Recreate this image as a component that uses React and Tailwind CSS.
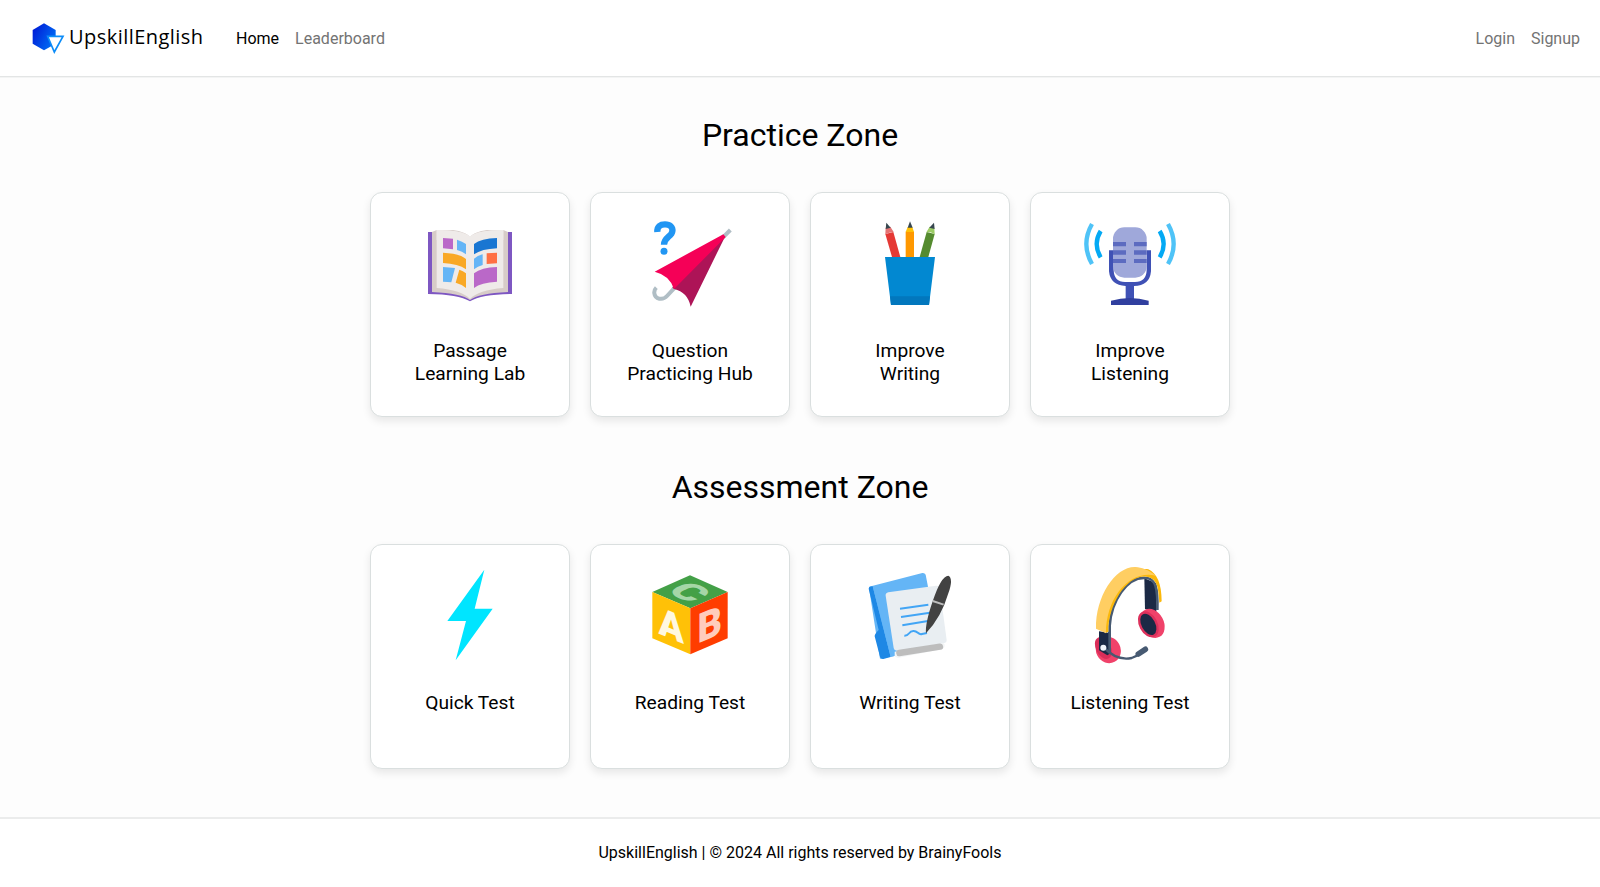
const BookIcon = () => (
  <svg className="h-[110px] w-[120px]" viewBox="0 -15 360 330">
    <path fill="#7e57c2" d="M54 66H306V252Q215 253 180 274Q145 253 54 252Z" />
    <path fill="#d7ccc8" d="M66 66L80 60H280L294 66V246Q205 250 180 270Q155 250 66 246Z" />
    <path fill="#efebe9" d="M80 60Q157 60 180 80Q203 60 280 60V234Q205 240 180 267Q155 240 80 234Z" />
    <path fill="#fff" d="M84 56Q160 58 180 80Q200 58 276 56Z" />
    <path fill="#efebe9" d="M80 60Q157 60 180 81Q203 60 280 60V90H80Z" />
    <path fill="#ba68c8" d="M99 84L129 86V118L99 115Z" />
    <path fill="#64b5f6" d="M141 89Q157 94 168 102V133Q157 124 141 120Z" />
    <path fill="#f9a825" d="M99 128Q148 130 168 147V178Q145 161 99 159Z" />
    <path fill="#64b5f6" d="M99 171L135 174L124 217L99 215Z" />
    <path fill="#f9a825" d="M148 179Q159 183 168 190V234Q156 223 137 218Z" />
    <path fill="#1976d2" d="M192 102Q213 85 261 84V115Q215 117 192 133Z" />
    <path fill="#64b5f6" d="M192 146Q202 137 218 133V165Q203 169 192 178Z" />
    <path fill="#ff7043" d="M230 130L261 128V160L230 162Z" />
    <path fill="#ba68c8" d="M192 190Q214 172 261 171V215Q213 217 192 234Z" />
  </svg>
);

const UmbrellaIcon = () => (
  <svg className="h-[110px] w-[120px]" viewBox="-15 -15 360 330">
    <path fill="none" stroke="#b0bec5" strokeWidth="12" d="M264 82L286 60M120 232L96 258C83 272 60 268 58 250C57 243 59 238 64 233" />
    <path fill="#ad1457" d="M270 80L167 290Q158 246 117 237L112 232Z" />
    <path fill="#f50057" d="M59 185L265 73L272 81L117 237Q104 196 59 185Z" />
    <path fill="none" stroke="#2196f3" strokeWidth="19" d="M67 66C66 49 76 43 90 43C105 43 114 51 112 64C110 80 87 82 87 104" />
    <circle cx="87" cy="124" r="10.5" fill="#2196f3" />
  </svg>
);

const PencilsIcon = () => (
  <svg className="h-[110px] w-[120px]" viewBox="-30 -15 360 330">
    <path fill="#e53935" d="M76 72L100 66L121 141H96Z" />
    <path fill="#e57373" d="M77 53L91 50L101 66L88 68L76 73Z" />
    <path fill="#37474f" d="M79 38L92 53L77 57Z" />
    <path fill="#ff9800" d="M137 65H162V141H137Z" />
    <path fill="#ffc107" d="M143 51H157L162 66H137Z" />
    <path fill="#37474f" d="M150 34L158 53H143Z" />
    <path fill="#558b2f" d="M200 66L224 72L205 141H179Z" />
    <path fill="#9ccc65" d="M209 50L223 55L224 73L212 67H199Z" />
    <path fill="#37474f" d="M222 38L224 57L208 53Z" />
    <path fill="#0288d1" d="M75 141H225L207 285H93Z" />
    <path fill="#0277bd" d="M90 259H210L207 285H93Z" />
  </svg>
);

const MicIcon = () => (
  <svg className="h-[110px] w-[120px]" viewBox="-15 -15 360 330">
    <g fill="none" strokeWidth="13">
      <path stroke="#4fc3f7" d="M51 42Q17 102 51 162M279 42Q313 102 279 162" />
      <path stroke="#03a9f4" d="M77 63Q53 102 77 142M254 63Q278 102 254 142" />
    </g>
    <path fill="#3f51b5" d="M102 121H116V180Q117 216 150 216H180Q214 216 215 180V121H228V184Q224 228 177 228V272H152V228Q106 226 102 184Z" />
    <rect x="114" y="52" width="101" height="151" rx="34" fill="#9fa8da" />
    <path fill="#5c6bc0" d="M114 96H153V109H114ZM114 121H153V134H114ZM114 147H153V159H114ZM177 96H215V109H177ZM177 121H215V134H177ZM177 147H215V159H177Z" />
    <path fill="#303f9f" d="M108 272Q165 256 221 272V285H108Z" />
  </svg>
);

const BoltIcon = () => (
  <svg className="h-[110px] w-[120px]" viewBox="-60 -9 360 330">
    <path fill="#00e5ff" d="M163 29L134 146H188L77 301L108 183H52Z" />
  </svg>
);

const CubeIcon = () => (
  <svg className="h-[110px] w-[120px]" viewBox="-30 -9 360 330">
    <path fill="#43a047" d="M150 46L263 96L151 145L37 96Z" />
    <path fill="#ffc107" d="M37 96L151 145V283L37 235Z" />
    <path fill="#ff3d00" d="M151 145L263 96V235L151 283Z" />
    <g fontFamily="Roboto, sans-serif" fontWeight="900" textAnchor="middle" fontSize="100">
      <text fill="#fff8e1" transform="matrix(1.12 .46 0 1.15 94 236)">A</text>
      <text fill="#ffccbc" transform="matrix(1.14 -.47 0 1.22 209 235)">B</text>
      <text fill="#a5d6a7" transform="matrix(1.14 .56 -1 .46 114 112)">C</text>
    </g>
  </svg>
);

const WritingIcon = () => (
  <svg className="h-[110px] w-[120px]" viewBox="-30 -9 360 330">
    <path fill="#64b5f6" d="M27 84Q27 80 33 79L187 39Q194 38 197 44L235 240L103 288L60 296Z" />
    <path fill="#1e88e5" d="M26 86Q27 79 38 79L92 291L70 297Q62 298 60 290L44 229Q43 223 56 210Z" />
    <path fill="#64b5f6" d="M38 79L60 76L103 288L92 291Z" />
    <path fill="#f3f5f6" d="M104 275L252 250Q259 260 245 268L116 293Q108 294 104 288Z" />
    <path fill="#e9eef2" d="M77 107Q76 99 85 97L228 77Q237 76 239 84L260 240Q260 248 251 250L112 272Q103 272 101 264Z" />
    <path fill="none" stroke="#bdbdbd" strokeWidth="19" strokeLinecap="round" d="M118 279L240 260" />
    <path fill="none" stroke="#42a5f5" strokeWidth="6" d="M120 146L205 134M123 171L210 158M127 196L204 183M133 227C149 228 144 214 160 213C174 212 174 226 186 222L201 219" />
    <path fill="#424242" d="M198 220Q195 191 218 124Q243 48 265 47Q281 55 265 100Q244 172 198 220Z" />
    <path stroke="#bdbdbd" strokeWidth="6" d="M218 123L251 134" />
  </svg>
);

const HeadsetIcon = () => (
  <svg className="h-[110px] w-[120px]" viewBox="-45 -9 360 330">
    <ellipse cx="70" cy="270" rx="37" ry="40" transform="rotate(-28 70 270)" fill="#f0426a" />
    <ellipse cx="55" cy="264" rx="22" ry="35" transform="rotate(-28 55 264)" fill="#d92d59" />
    <path fill="#1b2945" d="M178 55L214 70V156L180 147Z" />
    <path fill="#1b2945" d="M42 214L69 218L78 205V279L67 286L42 271Z" />
    <path fill="none" stroke="#475a72" strokeWidth="8" d="M74 280V197C78 128 124 46 186 54C211 59 219 81 217 150" />
    <path fill="#fbb80b" d="M61 219L70 215C70 133 125 45 184 50C213 54 221 75 223 128L230 124C230 71 216 40 190 28C130 18 60 100 61 219Z" />
    <path fill="#ffce62" d="M33 206C31 108 92 18 152 21C169 22 190 29 212 47C134 29 63 112 63 220Z" />
    <ellipse cx="202" cy="190" rx="34" ry="46" transform="rotate(-28 202 190)" fill="#f0426a" />
    <ellipse cx="190" cy="193" rx="24" ry="38" transform="rotate(-28 190 193)" fill="#1b2945" stroke="#dc315c" strokeWidth="7" />
    <path fill="none" stroke="#475a72" strokeWidth="7" d="M57 263Q94 303 140 294Q155 289 164 280" />
    <path stroke="#475a72" strokeWidth="17" strokeLinecap="round" d="M160 282L181 268" />
    <circle cx="55" cy="263" r="9" fill="#f1f4fa" />
  </svg>
);

const Logo = () => (
  <svg className="mt-[2px] h-[32px] w-[33px] shrink-0" viewBox="94 68 99 96">
    <defs>
      <linearGradient id="hex" x1="0" y1="0.2" x2="1" y2="0.8">
        <stop stopColor="#001bd6" />
        <stop offset="1" stopColor="#0075f8" />
      </linearGradient>
    </defs>
    <path fill="url(#hex)" d="M130 69L165 89V130L130 150L96 130V89Z" />
    <path fill="#fff" stroke="#0c8cf8" strokeWidth="5" d="M141 108H187L161 155Z" />
  </svg>
);

const practice = [
  { Icon: BookIcon, lines: ["Passage", "Learning Lab"] },
  { Icon: UmbrellaIcon, lines: ["Question", "Practicing Hub"] },
  { Icon: PencilsIcon, lines: ["Improve", "Writing"] },
  { Icon: MicIcon, lines: ["Improve", "Listening"] },
];

const assessment = [
  { Icon: BoltIcon, lines: ["Quick Test"] },
  { Icon: CubeIcon, lines: ["Reading Test"] },
  { Icon: WritingIcon, lines: ["Writing Test"] },
  { Icon: HeadsetIcon, lines: ["Listening Test"] },
];

function Zone({ title, cards }) {
  return (
    <section className="flex h-[352px] flex-col items-center">
      <h2 className="h-[76px] text-[32px] leading-[38px]">{title}</h2>
      <div className="grid grid-cols-4 gap-5">
        {cards.map(({ Icon, lines }) => (
          <a
            key={lines.join(" ")}
            href="#"
            className="flex h-[225px] w-[200px] flex-col items-center rounded-xl border border-[#dadfdf] bg-white pt-3 shadow-[0_4px_8px_rgba(0,0,0,0.09)]"
          >
            <Icon />
            <p className="mt-6 text-center text-[19.2px] leading-[23px]">
              {lines.map((line) => (
                <span key={line} className="block">{line}</span>
              ))}
            </p>
          </a>
        ))}
      </div>
    </section>
  );
}

export default function App() {
  return (
    <div className="flex h-[887px] flex-col overflow-hidden bg-[#fdfdfd] font-['Roboto',sans-serif] text-black">
      <header className="flex h-[77px] shrink-0 items-center border-b border-[#e3e5e5] bg-white pr-5 pl-[31.5px] shadow-[0_1px_0_#f3f4f4]">
        <Logo />
        <span className="ml-[4.5px] w-[134px] pb-[2px] font-['Open_Sans',sans-serif] text-[20px] leading-[30px] tracking-[0.46px]">UpskillEnglish</span>
        <nav className="ml-[33px] flex flex-1 gap-4 pt-[2px] text-[16px] leading-6">
          <a href="#">Home</a>
          <a href="#" className="text-[#737373]">Leaderboard</a>
          <a href="#" className="ml-auto text-[#737373]">Login</a>
          <a href="#" className="text-[#737373]">Signup</a>
        </nav>
      </header>
      <main className="min-h-0 flex-1 pt-[39px]">
        <Zone title="Practice Zone" cards={practice} />
        <Zone title="Assessment Zone" cards={assessment} />
      </main>
      <footer className="flex h-[70px] shrink-0 justify-center border-t-2 border-[#ebecec] bg-white pt-[22px] text-[16px] leading-6">
        UpskillEnglish | © 2024 All rights reserved by BrainyFools
      </footer>
    </div>
  );
}
